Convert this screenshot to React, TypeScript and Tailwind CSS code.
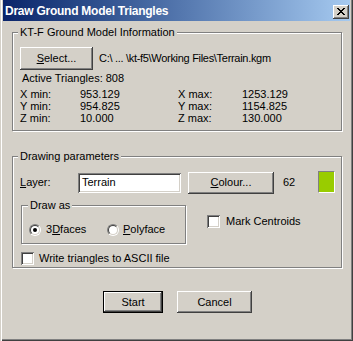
import React from "react";

const raised =
  "shadow-[inset_-1px_-1px_0_#404040,inset_1px_1px_0_#ffffff,inset_-2px_-2px_0_#808080,inset_2px_2px_0_#d4d0c8]";
const sunken =
  "shadow-[inset_1px_1px_0_#808080,inset_-1px_-1px_0_#ffffff,inset_2px_2px_0_#404040,inset_-2px_-2px_0_#d4d0c8]";

function Group({
  title,
  className,
  captionClass,
  children,
}: {
  title: string;
  className: string;
  captionClass: string;
  children?: React.ReactNode;
}) {
  return (
    <div
      className={`relative border border-[#808080] shadow-[inset_1px_1px_0_#ffffff,1px_1px_0_#ffffff] ${className}`}
    >
      <span className={`absolute top-[-7px] bg-[#d4d0c8] px-[2px] leading-[13px] ${captionClass}`}>
        {title}
      </span>
      {children}
    </div>
  );
}

function Radio({ checked }: { checked?: boolean }) {
  return (
    <span className="flex h-[12px] w-[12px] shrink-0 items-center justify-center rounded-full border border-t-[#808080] border-l-[#808080] border-b-white border-r-white">
      <span className="flex h-[10px] w-[10px] items-center justify-center rounded-full border border-t-[#404040] border-l-[#404040] border-b-[#d4d0c8] border-r-[#d4d0c8] bg-white">
        {checked && <span className="h-[4px] w-[4px] rounded-full bg-black" />}
      </span>
    </span>
  );
}

function Check() {
  return <span className={`h-[13px] w-[13px] shrink-0 bg-white ${sunken}`} />;
}

export default function App() {
  return (
    <div className="relative h-[341px] w-[353px] overflow-hidden bg-[#d4d0c8] font-['Liberation_Sans',Arial,sans-serif] text-[11px] leading-[13px] text-black shadow-[inset_1px_0_0_#d4d0c8,inset_2px_0_0_#ffffff,inset_-1px_-1px_0_#404040,inset_-2px_-2px_0_#808080]">
      {/* Title bar */}
      <div className="mx-[3px] flex h-[21px] items-start bg-linear-to-r from-[#0a246a] to-[#a6caf0] pl-[2px] pr-[1px]">
        <span className="mt-[4px] text-[12px] font-bold leading-[14px] tracking-[-0.25px] text-white">
          Draw Ground Model Triangles
        </span>
        <span
          className={`ml-auto mt-[5px] flex h-[14px] w-[16px] items-center justify-center bg-[#d4d0c8] ${raised}`}
        >
          <svg width="8" height="7" viewBox="0 0 8 7" className="mb-[1px]">
            <path
              d="M0 0h2v1h1v1h2V1h1V0h2v1h-1v1h-1v1h-1v1h1v1h1v1h1v1H6V6H5V5H3v1H2v1H0V6h1V5h1V4h1V3H2V2H1V1H0z"
              fill="#000"
            />
          </svg>
        </span>
      </div>

      <div className="pl-[12px]">
        {/* Group 1 */}
        <Group
          title="KT-F Ground Model Information"
          className="mt-[11px] h-[99px] w-[330px]"
          captionClass="left-[5px]"
        >
          <div className="ml-[7px] mt-[14px] flex items-center">
            <span
              className={`flex h-[23px] w-[73px] items-center justify-center bg-[#d4d0c8] ${raised}`}
            >
              <span>
                <u>S</u>elect...
              </span>
            </span>
            <span className="ml-[6px] whitespace-nowrap tracking-[-0.3px]">
              C:\ ... \kt-f5\Working Files\Terrain.kgm
            </span>
          </div>
          <div className="ml-[9px] mt-[2px] leading-[13px]">Active Triangles: 808</div>
          <div className="ml-[7px] mt-[3px] grid grid-cols-[60px_98px_64px_auto] leading-[12px]">
            <span>X min:</span>
            <span>953.129</span>
            <span>X max:</span>
            <span>1253.129</span>
            <span>Y min:</span>
            <span>954.825</span>
            <span>Y max:</span>
            <span>1154.825</span>
            <span>Z min:</span>
            <span>10.000</span>
            <span>Z max:</span>
            <span>130.000</span>
          </div>
        </Group>

        {/* Group 2 */}
        <Group
          title="Drawing parameters"
          className="mt-[25px] h-[112px] w-[330px]"
          captionClass="left-[5px]"
        >
          <div className="ml-[7px] mt-[14px] flex h-[23px] items-center">
            <span className="w-[58px]">
              <u>L</u>ayer:
            </span>
            <span
              className={`flex h-[20px] w-[103px] items-center bg-white pl-[4px] ${sunken}`}
            >
              Terrain
            </span>
            <span
              className={`ml-[7px] flex h-[22px] w-[86px] items-center justify-center bg-[#d4d0c8] ${raised}`}
            >
              <span>
                <u>C</u>olour...
              </span>
            </span>
            <span className="ml-[9px] w-[35px]">62</span>
            <span className="h-[22px] w-[17px] self-start border border-t-[#808080] border-l-[#808080] border-b-white border-r-white bg-[#99cc00]" />
          </div>

          <div className="mt-[11px] flex items-start">
            <Group title="Draw as" className="ml-[8px] h-[39px] w-[165px]" captionClass="left-[6px]">
              <div className="ml-[7px] mt-[17px] flex items-center">
                <span className="flex w-[78px] items-center">
                  <Radio checked />
                  <span className="ml-[5px]">
                    3<u>D</u>faces
                  </span>
                </span>
                <span className="flex items-center">
                  <Radio />
                  <span className="ml-[4px]">
                    <u>P</u>olyface
                  </span>
                </span>
              </div>
            </Group>
            <div className="ml-[21px] mt-[10px] flex items-center">
              <Check />
              <span className="ml-[6px]">Mark Centroids</span>
            </div>
          </div>

          <div className="ml-[8px] mt-[8px] flex items-center">
            <Check />
            <span className="ml-[5px]">Write triangles to ASCII file</span>
          </div>
        </Group>
      </div>

      {/* Buttons */}
      <div className="ml-[103px] mt-[23px] flex">
        <span
          className={`flex h-[22px] w-[60px] items-center justify-center border border-black bg-[#d4d0c8] ${raised}`}
        >
          Start
        </span>
        <span
          className={`ml-[14px] flex h-[22px] w-[75px] items-center justify-center bg-[#d4d0c8] ${raised}`}
        >
          Cancel
        </span>
      </div>
    </div>
  );
}
